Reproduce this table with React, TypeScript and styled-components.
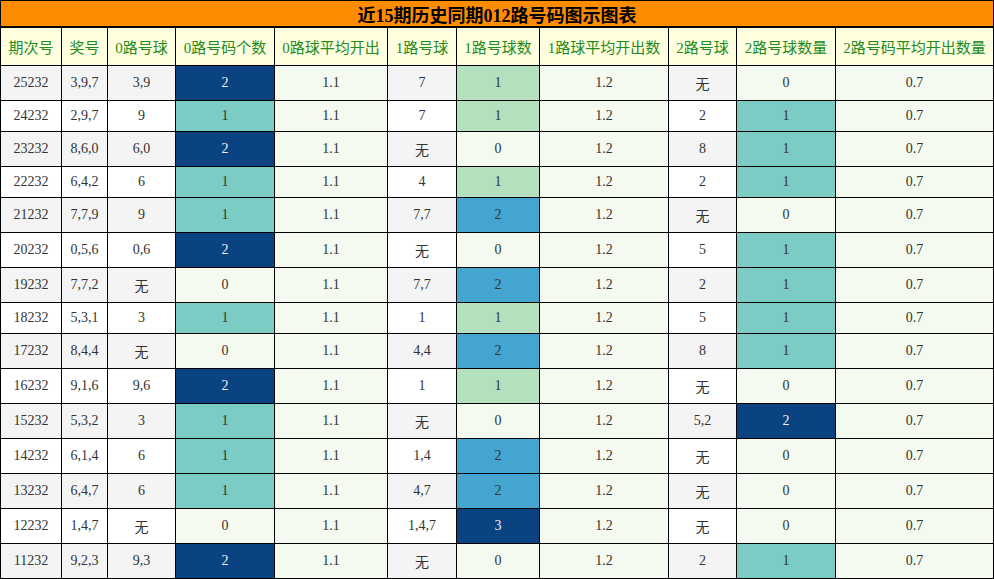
import React from "react";
import styled, { createGlobalStyle } from "styled-components";

const Global = createGlobalStyle`
  html, body { margin: 0; padding: 0; background: #fff; }
  body { font-family: "Liberation Serif", "Noto Sans CJK SC", serif; }
`;

const COLS = "60px 45px 67px 98px 112px 68px 82px 128px 67px 98px 157px";

const Table = styled.div`
  width: 994px;
  box-sizing: border-box;
  border: 1px solid #000;
  background: #000;
  display: flex;
  flex-direction: column;
  gap: 1px;
`;

const Title = styled.div`
  height: 26px;
  box-sizing: border-box;
  border-bottom: 1px solid #000;
  background: #ff8c00;
  color: #000;
  font-family: "Liberation Serif", "Noto Sans CJK SC", serif;
  font-weight: bold;
  font-size: 18px;
  display: flex;
  align-items: center;
  justify-content: center;
  padding-top: 1px;
`;

const Row = styled.div<{ $h: number }>`
  display: grid;
  grid-template-columns: ${COLS};
  gap: 1px;
  height: ${(p) => p.$h}px;
`;

const HeadCell = styled.div`
  background: #ffffe0;
  color: #228b22;
  font-family: "Liberation Serif", "Noto Sans CJK SC", serif;
  font-size: 15px;
  display: flex;
  align-items: center;
  justify-content: center;
  white-space: nowrap;
`;

const Cell = styled.div<{ $bg: string; $fg?: string; $cjk?: boolean }>`
  background: ${(p) => p.$bg};
  color: ${(p) => p.$fg || "#333"};
  font-family: ${(p) =>
    p.$cjk ? `"Noto Sans CJK SC", sans-serif` : `"Liberation Serif", serif`};
  font-size: 14px;
  display: flex;
  align-items: center;
  justify-content: center;
  white-space: nowrap;
`;

const headers = [
  "期次号",
  "奖号",
  "0路号球",
  "0路号码个数",
  "0路球平均开出",
  "1路号球",
  "1路号球数",
  "1路球平均开出数",
  "2路号球",
  "2路号球数量",
  "2路号码平均开出数量",
];

type R = [string, string, string, number, string, number, string, number];
// issue, prize, r0, c0, r1, c1, r2, c2
const rows: R[] = [
  ["25232", "3,9,7", "3,9", 2, "7", 1, "无", 0],
  ["24232", "2,9,7", "9", 1, "7", 1, "2", 1],
  ["23232", "8,6,0", "6,0", 2, "无", 0, "8", 1],
  ["22232", "6,4,2", "6", 1, "4", 1, "2", 1],
  ["21232", "7,7,9", "9", 1, "7,7", 2, "无", 0],
  ["20232", "0,5,6", "0,6", 2, "无", 0, "5", 1],
  ["19232", "7,7,2", "无", 0, "7,7", 2, "2", 1],
  ["18232", "5,3,1", "3", 1, "1", 1, "5", 1],
  ["17232", "8,4,4", "无", 0, "4,4", 2, "8", 1],
  ["16232", "9,1,6", "9,6", 2, "1", 1, "无", 0],
  ["15232", "5,3,2", "3", 1, "无", 0, "5,2", 2],
  ["14232", "6,1,4", "6", 1, "1,4", 2, "无", 0],
  ["13232", "6,4,7", "6", 1, "4,7", 2, "无", 0],
  ["12232", "1,4,7", "无", 0, "1,4,7", 3, "无", 0],
  ["11232", "9,2,3", "9,3", 2, "无", 0, "2", 1],
];

const LIGHT = "#f4faef";
const DARK = "#0a4282";

const countA = (n: number) =>
  n === 0 ? LIGHT : n === 1 ? "#7bccc4" : DARK;
const countB = (n: number) =>
  n === 0 ? LIGHT : n === 1 ? "#b3e1be" : n === 2 ? "#43a5d0" : DARK;
const fgFor = (bg: string) => (bg === DARK ? "#f0f0f0" : "#333");

function Plain({ v, bg }: { v: string; bg: string }) {
  return (
    <Cell $bg={bg} $cjk={v === "无"}>
      {v}
    </Cell>
  );
}

function Count({ n, bg }: { n: number; bg: string }) {
  return (
    <Cell $bg={bg} $fg={fgFor(bg)}>
      {n}
    </Cell>
  );
}

export default function App() {
  return (
    <>
      <Global />
      <Table>
        <Title>近15期历史同期012路号码图示图表</Title>
        <Row $h={37}>
          {headers.map((h) => (
            <HeadCell key={h}>{h}</HeadCell>
          ))}
        </Row>
        {rows.map((r, i) => {
          const plain = i % 2 === 0 ? "#f4f4f4" : "#ffffff";
          const tall = r[2] === "无" || r[4] === "无" || r[6] === "无";
          return (
            <Row key={r[0]} $h={tall ? 34 : 30}>
              <Plain v={r[0]} bg={plain} />
              <Plain v={r[1]} bg={plain} />
              <Plain v={r[2]} bg={plain} />
              <Count n={r[3]} bg={countA(r[3])} />
              <Plain v="1.1" bg={LIGHT} />
              <Plain v={r[4]} bg={plain} />
              <Count n={r[5]} bg={countB(r[5])} />
              <Plain v="1.2" bg={LIGHT} />
              <Plain v={r[6]} bg={plain} />
              <Count n={r[7]} bg={countA(r[7])} />
              <Plain v="0.7" bg={LIGHT} />
            </Row>
          );
        })}
      </Table>
    </>
  );
}
